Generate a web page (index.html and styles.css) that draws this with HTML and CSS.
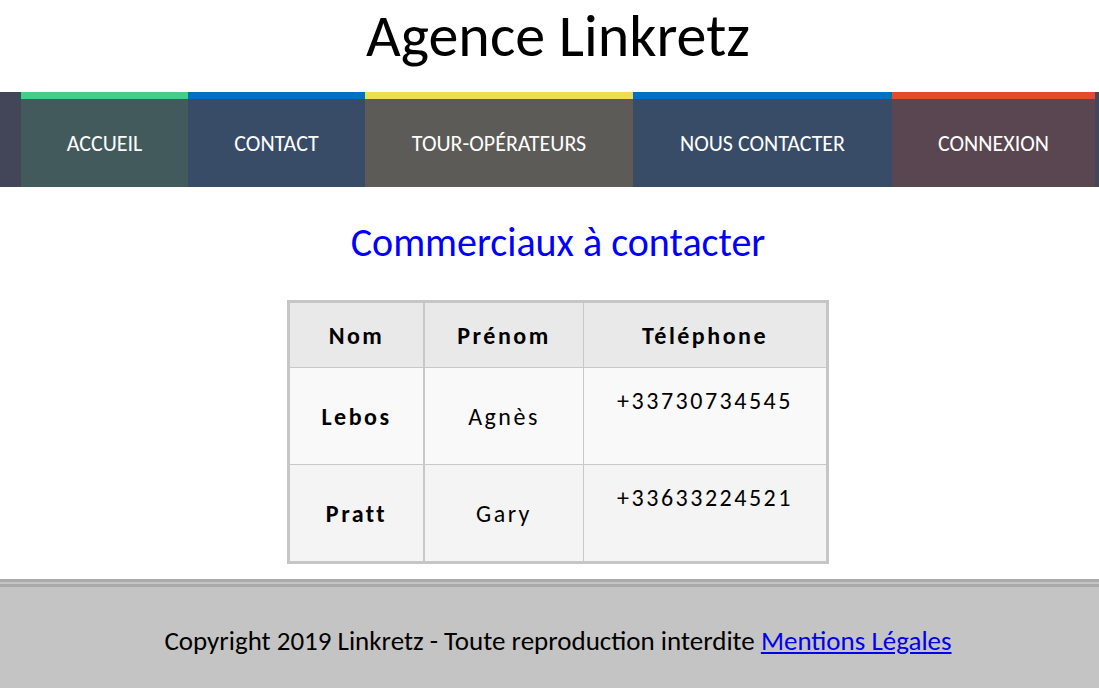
FILE: index.html
```html
<!DOCTYPE html>
<html lang="fr">
<head>
<meta charset="utf-8">
<title>Agence Linkretz</title>
<link rel="stylesheet" href="styles.css">
</head>
<body>
<header class="site-header">
  <h1 class="site-title">Agence Linkretz</h1>
  <nav class="main-nav">
    <ul class="nav-list">
      <li class="nav-item nav-green"><a href="#">ACCUEIL</a></li>
      <li class="nav-item nav-blue"><a href="#">CONTACT</a></li>
      <li class="nav-item nav-yellow"><a href="#">TOUR-OPÉRATEURS</a></li>
      <li class="nav-item nav-blue"><a href="#">NOUS CONTACTER</a></li>
      <li class="nav-item nav-red"><a href="#">CONNEXION</a></li>
    </ul>
  </nav>
</header>
<main class="content">
  <h2 class="section-title">Commerciaux à contacter</h2>
  <table class="contacts">
    <thead>
      <tr><th class="col-nom">Nom</th><th class="col-prenom">Prénom</th><th class="col-tel">Téléphone</th></tr>
    </thead>
    <tbody>
      <tr class="row-odd"><td class="col-nom name">Lebos</td><td class="col-prenom">Agnès</td><td class="col-tel phone">+33730734545</td></tr>
      <tr class="row-even"><td class="col-nom name">Pratt</td><td class="col-prenom">Gary</td><td class="col-tel phone">+33633224521</td></tr>
    </tbody>
  </table>
</main>
<footer class="site-footer">
  <p class="footer-text">Copyright 2019 Linkretz - Toute reproduction interdite <a href="#">Mentions Légales</a></p>
</footer>
</body>
</html>
```

FILE: styles.css
```css
html, body {
  margin: 0;
  padding: 0;
  background: #ffffff;
}
body {
  font-family: Calibri, Carlito, Lato, "Open Sans", sans-serif;
  color: #000;
  padding-left: 17px;
  overflow-x: hidden;
}
.site-title {
  margin: 0;
  padding-top: 4px;
  height: 88px;
  font-size: 60px;
  font-weight: normal;
  text-align: center;
  line-height: 64px;
}
.main-nav {
  background: #434558;
  margin-left: -17px;
  padding-left: 17px;
}
.nav-list {
  list-style: none;
  margin: 0;
  padding: 0;
  display: flex;
  justify-content: center;
}
.nav-item {
  border-top: 7px solid;
  height: 88px;
  flex: none;
  display: flex;
  align-items: center;
  justify-content: center;
}
.nav-item a {
  color: #fff;
  text-decoration: none;
  font-size: 22px;
  white-space: nowrap;
}
.nav-item:nth-child(1) { width: 167px; }
.nav-item:nth-child(2) { width: 177px; }
.nav-item:nth-child(3) { width: 268px; }
.nav-item:nth-child(4) { width: 259px; }
.nav-item:nth-child(5) { width: 203px; }
.nav-green { border-color: #44ce87; background: #435a5c; }
.nav-blue { border-color: #0070c0; background: #384c68; }
.nav-yellow { border-color: #f0dc50; background: #5c5b57; }
.nav-red { border-color: #e34c2a; background: #5a4650; }

.content {
  padding-top: 36px;
  padding-bottom: 15px;
}
.section-title {
  margin: 0 0 37px;
  text-align: center;
  color: #0000ff;
  font-weight: normal;
  font-size: 40px;
  line-height: 40px;
}
.contacts {
  margin: 0 auto;
  border-collapse: collapse;
  border: 3px solid #c6c6c6;
  font-size: 24px;
  letter-spacing: 2.5px;
}
.contacts th, .contacts td {
  border: 1px solid #c8c8c8;
  text-align: center;
  padding: 0;
}
.contacts th {
  background: #e9e9e9;
  height: 64px;
  font-weight: bold;
}
.contacts td { height: 96px; }
.contacts .col-nom { width: 133px; border-right: 2px solid #c8c8c8; }
.contacts .col-prenom { width: 158px; }
.contacts .col-tel { width: 242px; }
.row-odd td { background: #f9f9f9; }
.row-even td { background: #f4f4f4; }
.contacts td.name { font-weight: bold; }
.contacts td.phone {
  vertical-align: top;
  padding-top: 18px;
  height: 78px;
}
.site-footer {
  border-top: 8px double #aaaaaa;
  background: #c4c4c4;
  height: 110px;
  margin-left: -17px;
  padding-left: 17px;
}
.footer-text {
  margin: 0;
  padding-top: 37px;
  text-align: center;
  font-size: 27px;
}
.footer-text a { color: #0000ee; }
```
